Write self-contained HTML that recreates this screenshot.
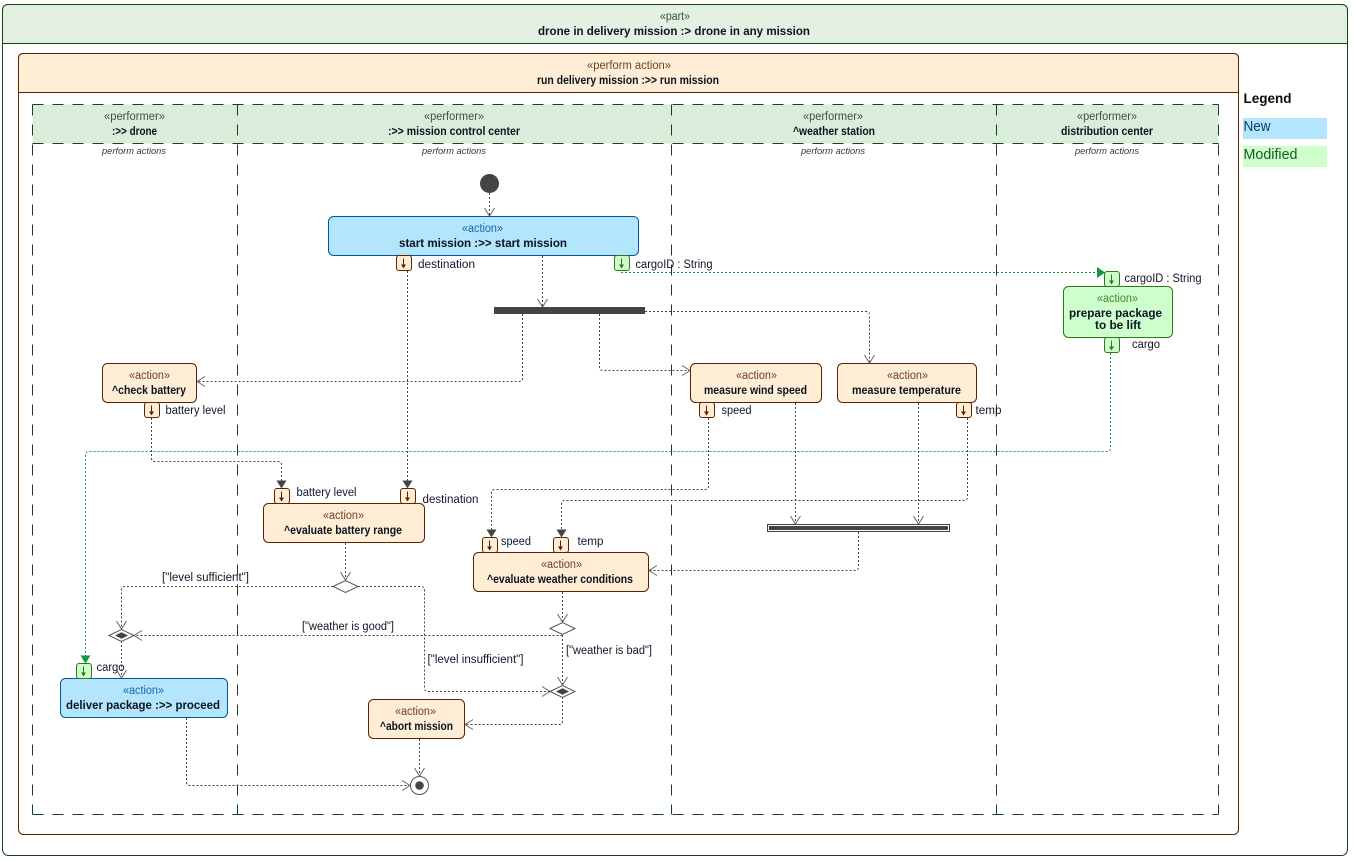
<!DOCTYPE html>
<html><head><meta charset="utf-8"><title>drone in delivery mission</title>
<style>
html,body{margin:0;padding:0;background:#fff;width:1355px;height:861px;overflow:hidden}
svg{display:block}
text{font-family:"Liberation Sans",Arial,sans-serif;fill:#141414}
.b{font-size:11.5px;font-weight:bold;fill:#0c1420}
.s{font-size:11.5px}
.l{font-size:11.5px;fill:#14142a}
.i{font-size:9.5px;font-style:italic;fill:#2c3c46}
.lane{stroke:#14401a;stroke-width:1;stroke-dasharray:11 9;fill:none}
.c{fill:none;stroke:#444;stroke-width:1;stroke-dasharray:2 2}
.g{fill:none;stroke:#0e9a3e;stroke-width:1;stroke-dasharray:2 2}
.o{fill:none;stroke:#666;stroke-width:1}
.af{fill:#444}
.gf{fill:#0e9a3e}
.ao{fill:#ffedd5;stroke:#5e2200;stroke-width:1}
.ab{fill:#b3e5fc;stroke:#01579b;stroke-width:1}
.ag{fill:#ccffcc;stroke:#33761a;stroke-width:1}
.pa{fill:none;stroke:#5e2200;stroke-width:1}
.pg{fill:none;stroke:#33761a;stroke-width:1}
.so{fill:#6e4028}.sb{fill:#1565b0}.sg{fill:#3d8a2a}.sl{fill:#3a5540}
.d{fill:#fff;stroke:#555;stroke-width:1}
</style></head><body>
<svg xmlns="http://www.w3.org/2000/svg" width="1355" height="861" viewBox="0 0 1355 861">
<defs>
<g id="oD"><path class="o" d="M-5 -8L0 0L5 -8"/></g>
<g id="oL"><path class="o" d="M8 -5L0 0L8 5"/></g>
<g id="oR"><path class="o" d="M-8 -5L0 0L-8 5"/></g>
<path id="fD" d="M-5 -8L5 -8L0 0Z"/>
<g id="pO"><rect class="ao" x="0" y="0" width="15" height="15" rx="2.500"/><path class="pa" d="M7 3V12.500"/><path d="M4.500 9L9.500 9L7 13Z" fill="#5e2200"/></g>
<g id="pG"><rect class="ag" x="0" y="0" width="15" height="15" rx="2.500"/><path class="pg" d="M7 3V12.500"/><path d="M4.500 9L9.500 9L7 13Z" fill="#33761a"/></g>
</defs>

<!-- outer part -->
<rect x="2.500" y="4.500" width="1345" height="851" rx="6" fill="#fff" stroke="#14401a"/>
<path d="M2.500 43.500V10.500Q2.500 4.500 8.500 4.500H1341.500Q1347.500 4.500 1347.500 10.500V43.500Z" fill="#e3f1e3" stroke="#14401a"/>
<text class="s sl" x="660" y="20" textLength="30" lengthAdjust="spacingAndGlyphs">«part»</text>
<text class="b" x="538" y="35" textLength="272" lengthAdjust="spacingAndGlyphs">drone in delivery mission :&gt; drone in any mission</text>

<!-- inner perform action -->
<rect x="18.500" y="53.500" width="1220" height="781" rx="5" fill="#fff" stroke="#5e2200"/>
<path d="M18.500 92.500V58.500Q18.500 53.500 23.500 53.500H1233.500Q1238.500 53.500 1238.500 58.500V92.500Z" fill="#ffedd5" stroke="#5e2200"/>
<text class="s so" x="587" y="69" textLength="84" lengthAdjust="spacingAndGlyphs">«perform action»</text>
<text class="b" x="537" y="84" textLength="182" lengthAdjust="spacingAndGlyphs">run delivery mission :&gt;&gt; run mission</text>

<!-- swimlanes -->
<rect x="32.500" y="104.500" width="1186" height="39" fill="#d9edda"/>
<path class="lane" d="M32.500 104.500H1218.500"/>
<path class="lane" d="M32.500 143.500H1218.500"/>
<path class="lane" d="M32.500 814.500H1218.500"/>
<path class="lane" d="M32.500 104.500V814.500"/>
<path class="lane" d="M237.500 104.500V814.500"/>
<path class="lane" d="M671.500 104.500V814.500"/>
<path class="lane" d="M996.500 104.500V814.500"/>
<path class="lane" d="M1218.500 104.500V814.500"/>

<text class="s sl" x="104" y="120" textLength="61" lengthAdjust="spacingAndGlyphs">«performer»</text>
<text class="b" x="112" y="135" textLength="45" lengthAdjust="spacingAndGlyphs">:&gt;&gt; drone</text>
<text class="i" x="102" y="154" textLength="64" lengthAdjust="spacingAndGlyphs">perform actions</text>
<text class="s sl" x="424" y="120" textLength="60" lengthAdjust="spacingAndGlyphs">«performer»</text>
<text class="b" x="388" y="135" textLength="132" lengthAdjust="spacingAndGlyphs">:&gt;&gt; mission control center</text>
<text class="i" x="422" y="154" textLength="64" lengthAdjust="spacingAndGlyphs">perform actions</text>
<text class="s sl" x="803" y="120" textLength="60" lengthAdjust="spacingAndGlyphs">«performer»</text>
<text class="b" x="793" y="135" textLength="82" lengthAdjust="spacingAndGlyphs">^weather station</text>
<text class="i" x="801" y="154" textLength="64" lengthAdjust="spacingAndGlyphs">perform actions</text>
<text class="s sl" x="1077" y="120" textLength="60" lengthAdjust="spacingAndGlyphs">«performer»</text>
<text class="b" x="1061" y="135" textLength="92" lengthAdjust="spacingAndGlyphs">distribution center</text>
<text class="i" x="1075" y="154" textLength="64" lengthAdjust="spacingAndGlyphs">perform actions</text>

<!-- connectors -->
<path class="c" d="M489.500 193V216"/><use href="#oD" x="489.500" y="216"/>
<path class="c" d="M542.500 256V307"/><use href="#oD" x="542.500" y="307"/>
<path class="c" d="M522.500 314V378Q522.500 381.500 519 381.500H197"/><use href="#oL" x="197" y="381.500"/>
<path class="c" d="M599.500 314V367Q599.500 370.500 603 370.500H690"/><use href="#oR" x="690" y="370.500"/>
<path class="c" d="M645 311.500H866Q869.500 311.500 869.500 315V363"/><use href="#oD" x="869.500" y="363"/>
<path class="c" d="M407.500 271V481"/><use href="#fD" class="af" x="407.500" y="488.500"/>
<path class="c" d="M151.500 418V458Q151.500 461.500 155 461.500H278Q281.500 461.500 281.500 465V481"/><use href="#fD" class="af" x="281.500" y="488.500"/>
<path class="c" d="M708.500 418V486Q708.500 489.500 705 489.500H495Q491.500 489.500 491.500 493V530"/><use href="#fD" class="af" x="491.500" y="537.500"/>
<path class="c" d="M967.500 418V497Q967.500 500.500 964 500.500H565Q561.500 500.500 561.500 504V530"/><use href="#fD" class="af" x="561.500" y="537.500"/>
<path class="c" d="M795.500 403V524"/><use href="#oD" x="795.500" y="524"/>
<path class="c" d="M918.500 403V524"/><use href="#oD" x="918.500" y="524"/>
<path class="c" d="M858.500 532V567Q858.500 570.500 855 570.500H649"/><use href="#oL" x="649" y="570.500"/>
<path class="c" d="M345.500 543V580"/><use href="#oD" x="345.500" y="580"/>
<path class="c" d="M333 586.500H125Q121.500 586.500 121.500 590V629"/><use href="#oD" x="121.500" y="629"/>
<path class="c" d="M358 586.500H421Q424.500 586.500 424.500 590V688Q424.500 691.500 428 691.500H550"/><use href="#oR" x="550" y="691.500"/>
<path class="c" d="M562.500 592V622"/><use href="#oD" x="562.500" y="622"/>
<path class="c" d="M562.500 635.500H134"/><use href="#oL" x="134" y="635.500"/>
<path class="c" d="M562.500 635V685"/><use href="#oD" x="562.500" y="685"/>
<path class="c" d="M562.500 697V721Q562.500 724.500 559 724.500H465"/><use href="#oL" x="465" y="724.500"/>
<path class="c" d="M419.500 739V776"/><use href="#oD" x="419.500" y="776"/>
<path class="c" d="M121.500 641V678"/><use href="#oD" x="121.500" y="678"/>
<path class="c" d="M186.500 718V782Q186.500 785.500 190 785.500H410"/><use href="#oR" x="410" y="785.500"/>

<!-- green object flows -->
<path class="g" d="M621 272.500H1097"/>
<path class="gf" d="M1097 267L1105 272.500L1097 278Z"/>
<path class="g" d="M1110.500 353V448Q1110.500 451.500 1107 451.500H89Q85.500 451.500 85.500 455V656"/>
<use href="#fD" class="gf" x="85.500" y="663.500"/>

<!-- nodes -->
<circle cx="489.500" cy="183.500" r="9.500" fill="#444"/>
<rect x="494" y="307" width="151" height="7" fill="#444"/>
<rect x="767.500" y="524.500" width="182" height="7" fill="#fff" stroke="#444"/>
<rect x="769" y="526" width="179" height="4" fill="#444"/>
<path class="d" d="M333 586.500L345.500 580.500L358 586.500L345.500 592.500Z"/>
<path class="d" d="M550 628.500L562.500 622.500L575 628.500L562.500 634.500Z"/>
<path class="d" d="M109 635.500L121.500 629.500L134 635.500L121.500 641.500Z"/>
<path class="af" d="M115 635.500L121.500 632.300L128 635.500L121.500 638.700Z"/>
<path class="d" d="M550 691.500L562.500 685.500L575 691.500L562.500 697.500Z"/>
<path class="af" d="M556 691.500L562.500 688.300L569 691.500L562.500 694.700Z"/>
<circle cx="419.500" cy="785.500" r="9" fill="#fff" stroke="#555"/>
<circle cx="419.500" cy="785.500" r="4.300" fill="#444"/>

<!-- actions -->
<rect class="ab" x="328.500" y="216.500" width="310" height="39" rx="5"/>
<rect class="ao" x="102.500" y="363.500" width="94" height="39" rx="5"/>
<rect class="ao" x="690.500" y="363.500" width="131" height="39" rx="5"/>
<rect class="ao" x="837.500" y="363.500" width="139" height="39" rx="5"/>
<rect class="ag" x="1063.500" y="286.500" width="109" height="51" rx="5"/>
<rect class="ao" x="263.500" y="503.500" width="161" height="39" rx="5"/>
<rect class="ao" x="473.500" y="552.500" width="175" height="39" rx="5"/>
<rect class="ao" x="368.500" y="699.500" width="96" height="39" rx="5"/>
<rect class="ab" x="60.500" y="678.500" width="167" height="39" rx="5"/>

<!-- pins -->
<use href="#pO" x="396.500" y="255.500"/>
<use href="#pG" x="614.500" y="255.500"/>
<use href="#pG" x="1104.500" y="271.500"/>
<use href="#pG" x="1104.500" y="337.500"/>
<use href="#pO" x="144.500" y="402.500"/>
<use href="#pO" x="699.500" y="402.500"/>
<use href="#pO" x="956.500" y="402.500"/>
<use href="#pO" x="274.500" y="488.500"/>
<use href="#pO" x="400.500" y="488.500"/>
<use href="#pO" x="482.500" y="537.500"/>
<use href="#pO" x="553.500" y="537.500"/>
<use href="#pG" x="76.500" y="663.500"/>

<!-- action text -->
<text class="s sb" x="462" y="232" textLength="41" lengthAdjust="spacingAndGlyphs">«action»</text>
<text class="b" x="399" y="247" textLength="168" lengthAdjust="spacingAndGlyphs">start mission :&gt;&gt; start mission</text>
<text class="s so" x="129" y="379" textLength="41" lengthAdjust="spacingAndGlyphs">«action»</text>
<text class="b" x="112" y="394" textLength="74" lengthAdjust="spacingAndGlyphs">^check battery</text>
<text class="s so" x="736" y="379" textLength="41" lengthAdjust="spacingAndGlyphs">«action»</text>
<text class="b" x="704" y="394" textLength="103" lengthAdjust="spacingAndGlyphs">measure wind speed</text>
<text class="s so" x="887" y="379" textLength="41" lengthAdjust="spacingAndGlyphs">«action»</text>
<text class="b" x="852" y="394" textLength="109" lengthAdjust="spacingAndGlyphs">measure temperature</text>
<text class="s sg" x="1097" y="302" textLength="41" lengthAdjust="spacingAndGlyphs">«action»</text>
<text class="b" x="1069" y="317" textLength="93" lengthAdjust="spacingAndGlyphs">prepare package</text>
<text class="b" x="1095" y="329" textLength="46" lengthAdjust="spacingAndGlyphs">to be lift</text>
<text class="s so" x="323" y="519" textLength="41" lengthAdjust="spacingAndGlyphs">«action»</text>
<text class="b" x="284" y="534" textLength="118" lengthAdjust="spacingAndGlyphs">^evaluate battery range</text>
<text class="s so" x="541" y="568" textLength="41" lengthAdjust="spacingAndGlyphs">«action»</text>
<text class="b" x="487" y="583" textLength="146" lengthAdjust="spacingAndGlyphs">^evaluate weather conditions</text>
<text class="s so" x="395" y="715" textLength="41" lengthAdjust="spacingAndGlyphs">«action»</text>
<text class="b" x="380" y="730" textLength="73" lengthAdjust="spacingAndGlyphs">^abort mission</text>
<text class="s sb" x="123" y="694" textLength="41" lengthAdjust="spacingAndGlyphs">«action»</text>
<text class="b" x="66" y="709" textLength="154" lengthAdjust="spacingAndGlyphs">deliver package :&gt;&gt; proceed</text>

<!-- pin labels -->
<text class="l" x="418" y="268" textLength="57" lengthAdjust="spacingAndGlyphs">destination</text>
<text class="l" x="635.500" y="268" textLength="77" lengthAdjust="spacingAndGlyphs">cargoID : String</text>
<text class="l" x="1124.500" y="282" textLength="77" lengthAdjust="spacingAndGlyphs">cargoID : String</text>
<text class="l" x="1132" y="348" textLength="28" lengthAdjust="spacingAndGlyphs">cargo</text>
<text class="l" x="165.500" y="414" textLength="60" lengthAdjust="spacingAndGlyphs">battery level</text>
<text class="l" x="721.500" y="414" textLength="30" lengthAdjust="spacingAndGlyphs">speed</text>
<text class="l" x="975.500" y="414" textLength="26" lengthAdjust="spacingAndGlyphs">temp</text>
<text class="l" x="296.500" y="496" textLength="60" lengthAdjust="spacingAndGlyphs">battery level</text>
<text class="l" x="422.500" y="503" textLength="56" lengthAdjust="spacingAndGlyphs">destination</text>
<text class="l" x="501" y="545" textLength="30" lengthAdjust="spacingAndGlyphs">speed</text>
<text class="l" x="577.500" y="545" textLength="26" lengthAdjust="spacingAndGlyphs">temp</text>
<text class="l" x="96.500" y="671" textLength="28" lengthAdjust="spacingAndGlyphs">cargo</text>

<!-- guards -->
<text class="l" x="162" y="581" textLength="87" lengthAdjust="spacingAndGlyphs">["level sufficient"]</text>
<text class="l" x="302" y="630" textLength="92" lengthAdjust="spacingAndGlyphs">["weather is good"]</text>
<text class="l" x="427.500" y="663" textLength="96" lengthAdjust="spacingAndGlyphs">["level insufficient"]</text>
<text class="l" x="566" y="654" textLength="86" lengthAdjust="spacingAndGlyphs">["weather is bad"]</text>

<!-- legend -->
<text x="1243.500" y="103" textLength="48" lengthAdjust="spacingAndGlyphs" style="font-size:14px;font-weight:bold;fill:#0a0a14">Legend</text>
<rect x="1243" y="118" width="84" height="21" fill="#b3e5fc"/>
<text x="1243.500" y="131" textLength="27" lengthAdjust="spacingAndGlyphs" style="font-size:14.500px;fill:#0a3f70">New</text>
<rect x="1243" y="146" width="84" height="21" fill="#ccffcc"/>
<text x="1243.500" y="159" textLength="54" lengthAdjust="spacingAndGlyphs" style="font-size:14.500px;fill:#1f5a1f">Modified</text>
</svg>
</body></html>
